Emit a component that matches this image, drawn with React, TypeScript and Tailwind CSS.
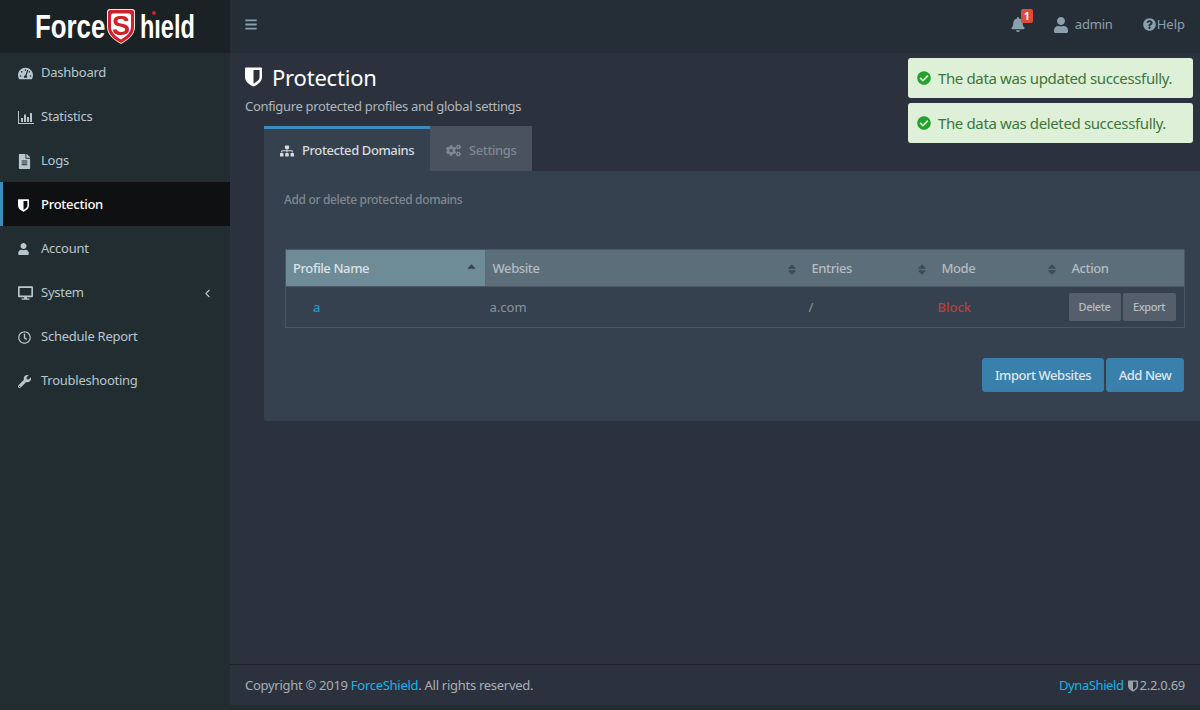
import React from "react";
import {
  FaTachometerAlt, FaFileAlt, FaUser, FaDesktop, FaRegClock, FaWrench, FaBars, FaBell,
  FaQuestionCircle, FaSitemap, FaCogs, FaCheckCircle, FaSortUp, FaSortDown,
} from "react-icons/fa";
import { FiChevronLeft } from "react-icons/fi";

const font = { fontFamily: '"Noto Sans", sans-serif' };
const logoFont = { fontFamily: '"Liberation Sans", sans-serif' };

function Shield({ className }: { className?: string }) {
  return (
    <svg viewBox="0 0 16 18" className={className} fill="currentColor">
      <path fillRule="evenodd" d="M1 0h14a1 1 0 0 1 1 1v8c0 4-3.600 7.200-8 9-4.400-1.800-8-5-8-9V1a1 1 0 0 1 1-1zm7 2.300v12.900c2.900-1.400 5.700-3.600 5.700-6.200V2.300z" />
    </svg>
  );
}

function ChartIcon({ className }: { className?: string }) {
  return (
    <svg viewBox="0 0 16 13" className={className} fill="currentColor">
      <path d="M0 0h1v12h15v1H0zM3 7h2v4H3zM6 3.500h2V11H6zM9 6h2v5H9zM12 2h2v9h-2z" />
    </svg>
  );
}

function Logo() {
  return (
    <div className="flex items-center h-[53px] bg-[#1a2226] pl-[35px] shrink-0">
      <span className="w-[72px] shrink-0">
        <span className="inline-block origin-left scale-x-[0.76] text-white font-bold text-[34px] leading-none" style={logoFont}>Force</span>
      </span>
      <svg viewBox="0 0 28 35" className="w-[28px] h-[35px] mr-[5px] shrink-0">
        <path d="M3 0h22a3 3 0 0 1 3 3v15c0 8-7 13-14 17C7 31 0 26 0 18V3a3 3 0 0 1 3-3z" fill="#f4e8e8" />
        <path d="M3.500 1h21a2.500 2.500 0 0 1 2.500 2.500V18c0 7.500-6.500 12.500-13 16C7.500 30.500 1 25.500 1 18V3.500A2.500 2.500 0 0 1 3.500 1z" fill="#d0202a" />
        <path d="M6 4.500h16a2 2 0 0 1 2 2V18c0 5.500-5 9.500-10 12.500C9 27.500 4 23.500 4 18V6.500a2 2 0 0 1 2-2z" fill="#ffffff" />
        <text x="14" y="25.500" textAnchor="middle" fontSize="27" fontWeight="700" fill="#d0202a" fontFamily="Liberation Sans">S</text>
      </svg>
      <span className="relative w-[56px] shrink-0">
        <span className="inline-block origin-left scale-x-[0.69] text-white font-bold text-[34px] leading-none whitespace-nowrap" style={logoFont}>hıeld</span>
        <span className="absolute left-[12px] top-[2px] w-[4px] h-[4px] rounded-full bg-[#d0202a]" />
      </span>
    </div>
  );
}

const navItems: { label: string; icon: React.ReactNode; active?: boolean; caret?: boolean }[] = [
  { label: "Dashboard", icon: <FaTachometerAlt className="w-[15px] h-[15px]" /> },
  { label: "Statistics", icon: <ChartIcon className="w-[16px] h-[13px]" /> },
  { label: "Logs", icon: <FaFileAlt className="w-[13px] h-[15px]" /> },
  { label: "Protection", icon: <Shield className="w-[11px] h-[13px]" />, active: true },
  { label: "Account", icon: <FaUser className="w-[11px] h-[12px]" /> },
  { label: "System", icon: <FaDesktop className="w-[15px] h-[14px]" />, caret: true },
  { label: "Schedule Report", icon: <FaRegClock className="w-[13px] h-[13px]" /> },
  { label: "Troubleshooting", icon: <FaWrench className="w-[13px] h-[13px]" /> },
];

function Sidebar() {
  return (
    <aside className="w-[230px] shrink-0 bg-[#222d32] flex flex-col">
      <Logo />
      <nav className="flex flex-col -mt-[3px] tracking-[-0.25px]">
        {navItems.map((it) => (
          <div
            key={it.label}
            className={
              "h-[44px] flex items-center pr-[16px] pt-[2px] text-[13px] border-l-[3px] " +
              (it.active ? "bg-[#0f1011] border-[#3c8dbc] text-white font-medium" : "border-transparent text-[#b8c7ce]")
            }
          >
            <span className="w-[38px] pl-[15px] flex items-center shrink-0">{it.icon}</span>
            <span className="flex-1">{it.label}</span>
            {it.caret && <FiChevronLeft className="w-[13px] h-[13px]" />}
          </div>
        ))}
      </nav>
    </aside>
  );
}

function Header() {
  return (
    <header className="h-[53px] shrink-0 bg-[#252e36] flex items-center pl-[15px] pr-[15px] pb-[4px] text-[#8aa0ae] text-[13px]">
      <FaBars className="w-[12px] h-[13px]" />
      <div className="flex-1" />
      <div className="relative mr-[29px]">
        <FaBell className="w-[14px] h-[15px]" />
        <span className="absolute -top-[8px] left-[10px] w-[12px] h-[14px] rounded-[2px] bg-[#dd4b39] text-white text-[10px] font-bold leading-[14px] text-center">1</span>
      </div>
      <FaUser className="w-[14px] h-[16px] mr-[7px]" />
      <span className="mr-[30px] tracking-[-0.2px]">admin</span>
      <FaQuestionCircle className="w-[13px] h-[13px] mr-[1px]" />
      <span>Help</span>
    </header>
  );
}

function SortIcon({ up }: { up?: boolean }) {
  if (up)
    return <FaSortUp className="w-[11px] h-[13px] text-[#38434f] ml-auto" />;
  return (
    <span className="relative w-[10px] h-[13px] text-[#3d4a57] ml-auto">
      <FaSortUp className="absolute inset-0 w-[10px] h-[13px]" />
      <FaSortDown className="absolute inset-0 w-[10px] h-[13px]" />
    </span>
  );
}

function Th({ label, sort, active, wide }: { label: string; sort?: boolean; active?: boolean; wide?: boolean }) {
  return (
    <th className={"h-[37px] p-0 text-left font-medium text-[13px] tracking-[-0.4px] " + (active ? "bg-[#6e8b98] text-[#dde3e6]" : "bg-[#5b6e7a] text-[#b5bcc2]")}>
      <div className={"flex items-center h-full pt-[2px] pr-[8px] " + (wide ? "pl-[8px]" : "pl-[7px]")}>
        <span>{label}</span>
        {sort && <SortIcon up={active} />}
      </div>
    </th>
  );
}

function Table() {
  return (
    <table className="ml-[1px] w-[899px] table-fixed border-collapse border border-[#4a5663] text-[13px]">
      <colgroup>
        <col className="w-[199px]" />
        <col className="w-[320px]" />
        <col className="w-[130px]" />
        <col className="w-[130px]" />
        <col className="w-[120px]" />
      </colgroup>
      <thead>
        <tr className="border-b border-[#4a5663]">
          <Th label="Profile Name" sort active />
          <Th label="Website" sort wide />
          <Th label="Entries" sort />
          <Th label="Mode" sort />
          <Th label="Action" />
        </tr>
      </thead>
      <tbody>
        <tr className="h-[41px]">
          <td className="pl-[27px] pt-[1px] text-[#1b9ccf] font-medium">a</td>
          <td className="pl-[5px] pt-[1px] text-[#8a939c]">a.com</td>
          <td className="pl-[4px] pt-[1px] text-[#8a939c]">/</td>
          <td className="pl-[3px] pt-[1px] text-[#b8403a] font-medium">Block</td>
          <td className="pl-[4px]">
            <div className="flex gap-[2px]">
              <button className="w-[52px] h-[28px] rounded-[2px] bg-[#555f6b] text-[#b5bcc2] text-[11px] font-medium tracking-[-0.4px] pt-[1px]">Delete</button>
              <button className="w-[53px] h-[28px] rounded-[2px] bg-[#555f6b] text-[#b5bcc2] text-[11px] font-medium tracking-[-0.4px] pt-[1px]">Export</button>
            </div>
          </td>
        </tr>
      </tbody>
    </table>
  );
}

function Panel() {
  return (
    <section className="ml-[34px] w-[936px]">
      <div className="flex h-[45px] tracking-[-0.4px]">
        <div className="w-[166px] border-t-[3px] border-[#3c8dbc] bg-[#36414f] flex items-center pl-[16px] pt-[2px] text-[13px] text-[#d5dade] font-medium">
          <FaSitemap className="w-[14px] h-[12px] mr-[8px]" />
          Protected Domains
        </div>
        <div className="w-[102px] bg-[#4a525e] flex items-center pl-[16px] pt-[4px] text-[13px] text-[#7f8892] font-medium">
          <FaCogs className="w-[15px] h-[13px] mr-[8px]" />
          Settings
        </div>
      </div>
      <div className="bg-[#36414f] h-[250px] pl-[20px] pr-[16px] rounded-bl-[3px]">
        <p className="pt-[20px] h-[78px] text-[12px] text-[#7f8892] font-medium tracking-[-0.35px]">Add or delete protected domains</p>
        <Table />
        <div className="flex justify-end gap-[2px] mt-[30px] tracking-[-0.45px]">
          <button className="w-[122px] h-[34px] rounded-[3px] border border-[#367fa9] bg-[#3a80ad] text-[#dfe6ea] text-[13px] font-medium pt-[2px]">Import Websites</button>
          <button className="w-[78px] h-[34px] rounded-[3px] border border-[#367fa9] bg-[#3a80ad] text-[#dfe6ea] text-[13px] font-medium pt-[2px]">Add New</button>
        </div>
      </div>
    </section>
  );
}

function Toast({ text }: { text: string }) {
  return (
    <div className="w-[285px] h-[40px] rounded-[3px] bg-[#dff0d8] flex items-center pl-[9px] text-[#3c763d] text-[15px] tracking-[-0.37px]">
      <FaCheckCircle className="w-[14px] h-[14px] mr-[7px] text-[#22a12c]" />
      {text}
    </div>
  );
}

export default function App() {
  return (
    <div className="relative w-[1200px] h-[710px] flex overflow-hidden bg-[#222d32]" style={font}>
      <Sidebar />
      <main className="flex-1 min-w-0 flex flex-col h-[705px]">
        <Header />
        <div className="flex-1 min-h-0 bg-[#2b323e] flex flex-col">
          <div className="flex-1 min-h-0">
            <div className="pl-[15px] pt-[12px]">
              <h1 className="flex items-center text-[22px] leading-[24px] text-white tracking-[-0.2px]">
                <Shield className="w-[17px] h-[20px] mr-[10px]" />
                Protection
              </h1>
              <p className="mt-[8px] text-[13px] leading-[18px] text-[#b0b6bc] tracking-[-0.33px]">Configure protected profiles and global settings</p>
            </div>
            <div className="mt-[11px]">
              <Panel />
            </div>
          </div>
          <footer className="h-[41px] border-t border-[#1c2127] flex items-center justify-between pl-[15px] pr-[15px] pt-[2px] text-[13px] text-[#a9afb5] tracking-[-0.28px]">
            <div>
              Copyright © 2019 <span className="text-[#13b5ea]">ForceShield</span>. All rights reserved.
            </div>
            <div className="flex items-center">
              <span className="text-[#13b5ea] tracking-[-0.4px]">DynaShield</span>
              <Shield className="w-[10px] h-[12px] ml-[4px] mr-[2px] text-[#9aa0a6]" />
              <span>2.2.0.69</span>
            </div>
          </footer>
        </div>
      </main>
      <div className="absolute left-[908px] top-[58px] flex flex-col gap-[5px]">
        <Toast text="The data was updated successfully." />
        <Toast text="The data was deleted successfully." />
      </div>
    </div>
  );
}
